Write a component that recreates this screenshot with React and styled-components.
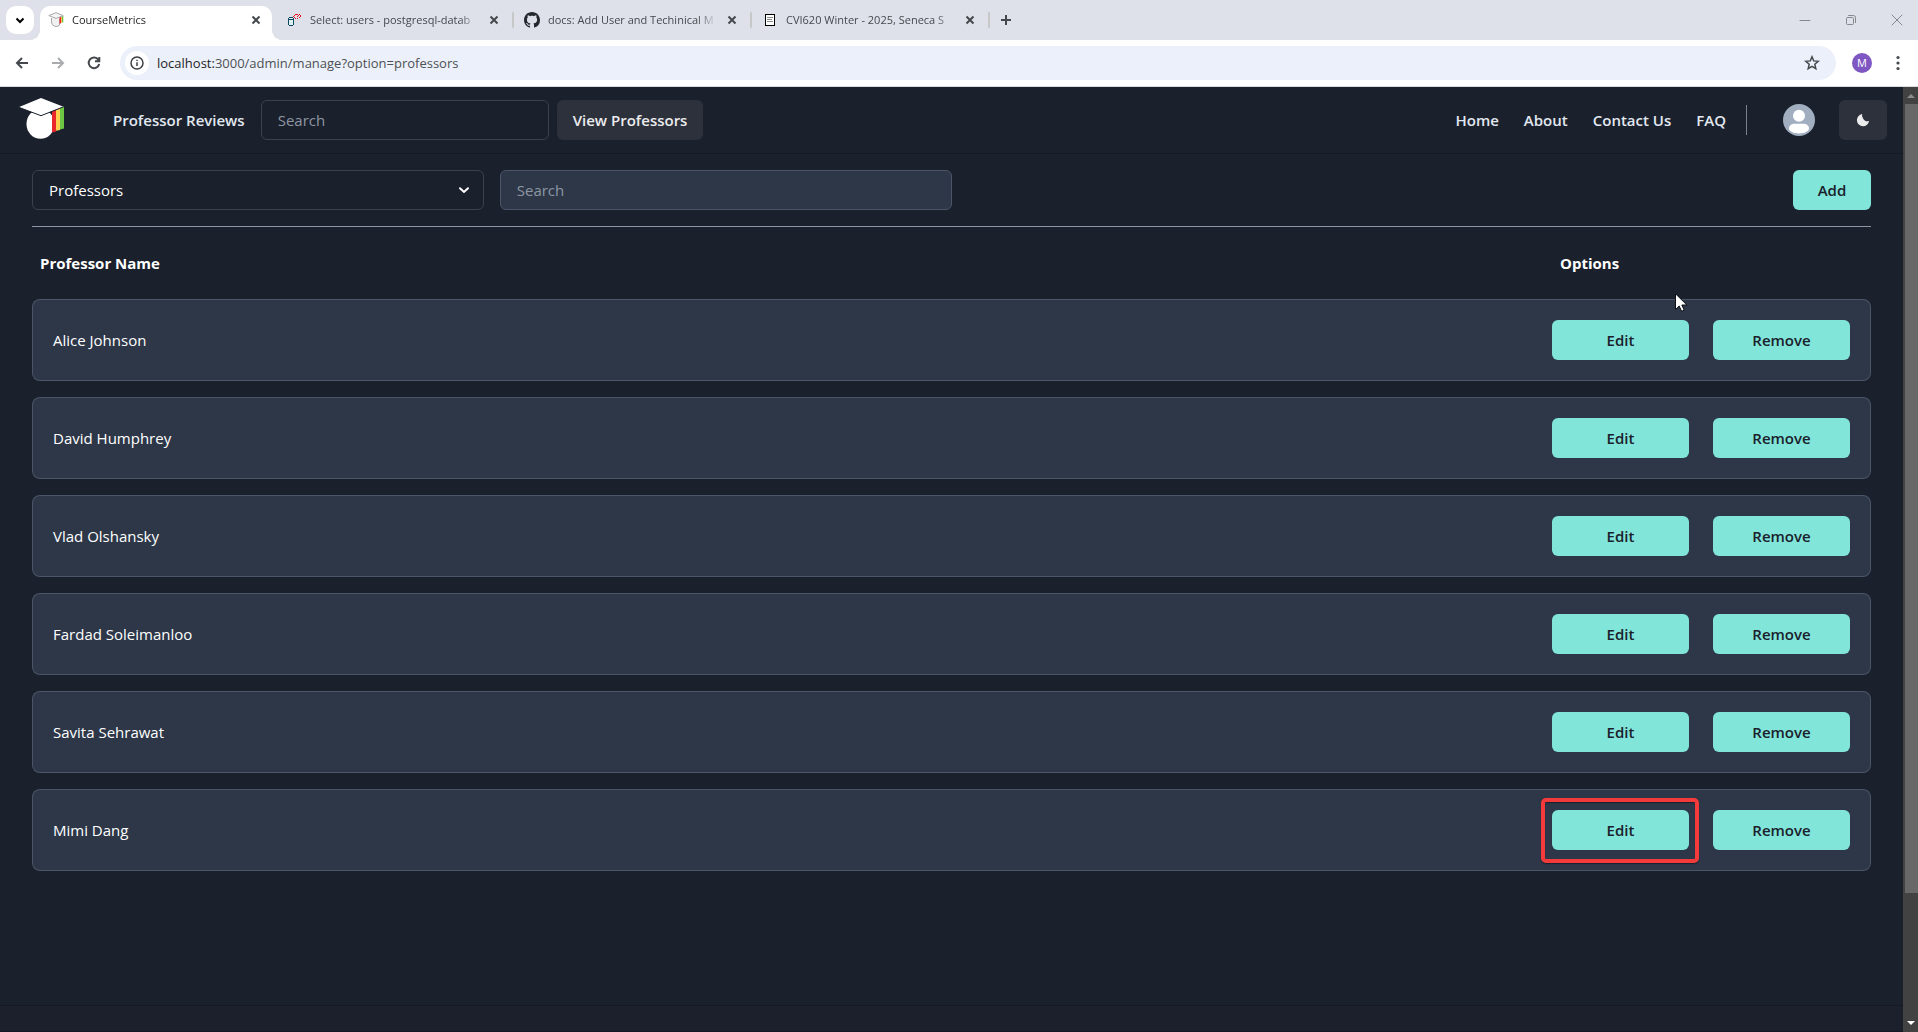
import React from "react";
import styled, { createGlobalStyle, css } from "styled-components";

const GlobalStyle = createGlobalStyle`
  *, *::before, *::after { box-sizing: border-box; }
  html, body, #root { height: 100%; }
  body {
    margin: 0;
    background: #1a202c;
    font-family: "Open Sans", "Noto Sans", sans-serif;
    font-size: 15px;
    line-height: 24px;
  }
  button, input, select { font: inherit; margin: 0; }
  button { border: 0; padding: 0; cursor: pointer; }
  svg { display: block; flex: none; }
`;

const Window = styled.div`
  display: flex;
  flex-direction: column;
  height: 100vh;
  overflow: hidden;
`;

/* ---------- browser chrome ---------- */

const TabStrip = styled.div`
  display: flex;
  align-items: center;
  flex: none;
  height: 40px;
  padding-left: 6px;
  background: #dee1e9;
`;

const TabSearch = styled.button`
  display: grid;
  place-items: center;
  width: 28px;
  height: 28px;
  margin-right: 6px;
  border-radius: 10px;
  background: #fff;
`;

const Tab = styled.div`
  position: relative;
  display: flex;
  align-items: center;
  width: 232px;
  height: 34px;
  margin-top: 6px;
  margin-right: ${(p) => (p.$active ? 6 : 2)}px;
  padding: 0 8px 6px;
  gap: 8px;
  font-size: 11px;
  line-height: 16px;
  color: #45494d;
  ${(p) =>
    p.$active &&
    css`
      background: #fff;
      color: #1f1f1f;
      border-radius: 10px 10px 0 0;
      &::before,
      &::after {
        content: "";
        position: absolute;
        bottom: 0;
        width: 10px;
        height: 10px;
      }
      &::before {
        right: 100%;
        background: radial-gradient(circle at 0 0, transparent 10px, #fff 10px);
      }
      &::after {
        left: 100%;
        background: radial-gradient(circle at 100% 0, transparent 10px, #fff 10px);
      }
    `}
`;

const TabTitle = styled.span`
  flex: 1;
  min-width: 0;
  white-space: nowrap;
  mask-image: linear-gradient(to right, #000 calc(100% - 18px), transparent);
`;

const PlainButton = styled.button`
  display: grid;
  place-items: center;
  width: ${(p) => p.$size}px;
  height: ${(p) => p.$size}px;
  flex: none;
  background: none;
  color: ${(p) => p.$color || "#45494d"};
`;

const TabDivider = styled.span`
  width: 2px;
  height: 16px;
  margin-right: 2px;
  border-radius: 1px;
  background: #c6c7c9;
`;

const WindowButtons = styled.div`
  display: flex;
  margin: 0 -2px 0 auto;
`;

const WindowButton = styled.button`
  display: grid;
  place-items: center;
  width: 46px;
  height: 40px;
  background: none;
  color: #85888c;
`;

const Toolbar = styled.div`
  display: flex;
  align-items: center;
  flex: none;
  height: 47px;
  padding: 0 10px;
  background: #fff;
  border-bottom: 1px solid #dadce0;
`;

const NavButtons = styled.div`
  display: flex;
  gap: 12px;
  margin: 0 14px 0 0;
`;

const AddressBar = styled.div`
  display: flex;
  align-items: center;
  flex: 1;
  height: 34px;
  padding: 0 12px 0 5px;
  gap: 8px;
  border-radius: 17px;
  background: #ecf0fa;
`;

const SiteInfo = styled.button`
  display: grid;
  place-items: center;
  width: 24px;
  height: 24px;
  border-radius: 50%;
  background: #fff;
  color: #3c4043;
`;

const Address = styled.p`
  flex: 1;
  margin: 0;
  font-size: 13px;
  line-height: 20px;
  color: #4c5054;
  b { font-weight: 400; color: #1f1f1f; }
`;

const Profile = styled.button`
  width: 20px;
  height: 20px;
  margin: 0 16px;
  border-radius: 50%;
  background: #7e57c2;
  color: #fff;
  font-size: 11px;
  line-height: 20px;
`;

/* ---------- page ---------- */

const Viewport = styled.div`
  display: flex;
  flex: 1;
  min-height: 0;
`;

const Page = styled.div`
  position: relative;
  display: flex;
  flex-direction: column;
  flex: 1;
  min-width: 0;
  color: #fff;
`;

const Header = styled.header`
  display: flex;
  align-items: center;
  justify-content: space-between;
  padding: 9px 16px;
  border-bottom: 1px solid #151924;
`;

const HeaderGroup = styled.div`
  display: flex;
  align-items: center;
  gap: ${(p) => p.$gap}px;
`;

const Brand = styled.a`
  display: block;
  margin-right: 33px;
`;

const NavLink = styled.a`
  padding: 0 ${(p) => p.$pad || 0}px;
  font-weight: 600;
  color: #e2e8f0;
  text-decoration: none;
  white-space: nowrap;
`;

const field = css`
  height: 40px;
  padding: 0 16px;
  border: 1px solid ${(p) => (p.$filled ? "#4a5568" : "#3c414c")};
  border-radius: 6px;
  background: ${(p) => (p.$filled ? "#2d3748" : "transparent")};
  color: #fff;
  outline: none;
`;

const TextField = styled.input`
  ${field}
  width: ${(p) => p.$width};
  &::placeholder { color: #8e96a3; opacity: 1; }
`;

const SubtleButton = styled.button`
  display: flex;
  align-items: center;
  justify-content: center;
  height: 40px;
  padding: 0 16px;
  border-radius: 6px;
  background: #2c313c;
  color: #ececee;
  font-weight: 600;
`;

const Divider = styled.span`
  width: 1px;
  height: 30px;
  margin-right: 36px;
  background: #7c828c;
`;

const SiteNav = styled.nav`
  display: flex;
  align-items: center;
  gap: 25px;
  margin-right: 20px;
`;

const Main = styled.main`
  flex: 1;
  padding: 16px 32px 0;
`;

const Controls = styled.div`
  display: flex;
  gap: 16px;
  padding-bottom: 16px;
  border-bottom: 1px solid #8f96a3;
`;

const SelectWrap = styled.div`
  display: grid;
  align-items: center;
  width: calc(25% - 8px);
  & > * { grid-area: 1 / 1; }
  & > svg { justify-self: end; margin-right: 10px; pointer-events: none; }
`;

const Select = styled.select`
  ${field}
  width: 100%;
  appearance: none;
  option { color: #1a202c; }
`;

const PrimaryButton = styled.button`
  position: relative;
  height: 40px;
  width: ${(p) => p.$width}px;
  border-radius: 6px;
  background: #81e6d9;
  color: #1a202c;
  font-weight: 600;
  ${(p) =>
    p.$marked &&
    css`
      &::after {
        content: "";
        position: absolute;
        inset: -12px -10px -13px -11px;
        border: 4px solid #f43a3a;
        border-radius: 5px;
        box-shadow: 0 1px 1px #1a202c, inset 0 1px 1px #1a202c;
      }
    `}
`;

const AddSlot = styled.div`
  margin-left: auto;
`;

const Table = styled.table`
  width: 100%;
  border-collapse: separate;
  border-spacing: 0 16px;
`;

const HeadCell = styled.th`
  height: 40px;
  padding: 0 8px;
  font-weight: 700;
  text-align: left;
`;

const NameCell = styled.td`
  height: 82px;
  padding: 0 20px;
  border: 1px solid #4a5568;
  border-right: 0;
  border-radius: 8px 0 0 8px;
  background: #2d3748;
`;

const OptionsCell = styled.td`
  width: 319px;
  padding: 0 20px 0 0;
  border: 1px solid #4a5568;
  border-left: 0;
  border-radius: 0 8px 8px 0;
  background: #2d3748;
`;

const Actions = styled.div`
  display: flex;
  justify-content: space-between;
`;

const Footer = styled.footer`
  height: 27px;
  background: #1b202c;
  border-top: 1px solid #151924;
  border-bottom: 1px solid #151924;
`;

const Pointer = styled.svg`
  position: absolute;
  top: 206px;
  right: 215px;
`;

const Scrollbar = styled.div`
  display: flex;
  flex-direction: column;
  align-items: center;
  width: 15px;
  background: #424242;
  padding: 7px 0;
`;

const ScrollTrack = styled.div`
  flex: 1;
  width: 100%;
  padding: 6px 0 7px 2px;
`;

const ScrollThumb = styled.div`
  height: calc(100% * 13 / 15);
  background: #686868;
`;

/* ---------- icons ---------- */

const LogoIcon = () => (
  <svg width="48" height="48" viewBox="0 0 48 48" aria-hidden="true">
    <ellipse cx="24.500" cy="28" rx="14" ry="14.700" fill="#fff" />
    <path d="M36 15.500l4-1.500v21.500l-4 1z" fill="#e8262b" />
    <path d="M40 14l4-1.500v21.500l-4 .8z" fill="#fbd04e" />
    <path d="M44 12l4-1.500v22l-4 1z" fill="#6cc644" />
    <path d="M25 2L2.500 11.200 25 19.500 47.500 10.800z" fill="#fff" />
    <path d="M2.500 11.200L25 19.700l22.500-8.900" fill="none" stroke="#1a202c" />
  </svg>
);

const CapIcon = () => (
  <svg width="16" height="16" viewBox="0 0 16 16" aria-hidden="true">
    <path d="M3.500 6v4a4.600 4.600 0 0 0 8 3V6.500" fill="#f1f1f1" stroke="#a6a8ab" />
    <path d="M11.500 5h1.500v6.500h-1.500z" fill="#e8262b" />
    <path d="M13 4.500h1v6.300h-1z" fill="#fbc04e" />
    <path d="M14 4h1.300v6.500H14z" fill="#6cc644" />
    <path d="M8 .8L.8 3.600 8 6.400l7.200-2.800z" fill="#f7f7f7" stroke="#a6a8ab" strokeLinejoin="round" />
  </svg>
);

const Stroke = ({ d, size = 16, box = 16, width = 2, round = true }) => (
  <svg width={size} height={size} viewBox={`0 0 ${box} ${box}`} fill="none" stroke="currentColor" strokeWidth={width} strokeLinecap={round ? "round" : "butt"} aria-hidden="true">
    <path d={d} />
  </svg>
);

const DatabaseIcon = () => (
  <svg width="16" height="16" viewBox="0 0 16 16" fill="none" shapeRendering="crispEdges" aria-hidden="true">
    <path d="M3 5h4v9H3z" fill="#dff1f5" />
    <path d="M3 5.500h4M3 7.500h4M3 13.500h4M2.500 6v7M7.500 6v7" stroke="#0b4a63" />
    <path d="M9 2.500h1M8 3.500h1M7 4.500h1M8 5.500h1M9 6.500h1M10 2.500h2M12 3.500h1M11 4.500h1M11 6.500h1M13 2.500h1M14 3.500h1M13 5.500h1M14 4.500h1" stroke="#e8101c" />
  </svg>
);

const GithubIcon = () => (
  <svg width="16" height="16" viewBox="0 0 16 16" fill="#24292f" aria-hidden="true">
    <path d="M8 0C3.580 0 0 3.580 0 8c0 3.540 2.290 6.530 5.470 7.590.4.070.55-.17.55-.38 0-.19-.01-.82-.01-1.490-2.010.37-2.530-.49-2.690-.94-.09-.23-.48-.94-.82-1.130-.28-.15-.68-.52-.01-.53.63-.01 1.080.58 1.230.82.72 1.210 1.870.87 2.330.66.07-.52.28-.87.51-1.070-1.780-.2-3.640-.89-3.640-3.950 0-.87.31-1.590.82-2.150-.08-.2-.36-1.020.08-2.120 0 0 .67-.21 2.200.82.64-.18 1.320-.27 2-.27s1.360.09 2 .27c1.530-1.040 2.200-.82 2.200-.82.44 1.100.16 1.920.08 2.120.51.56.82 1.270.82 2.150 0 3.070-1.870 3.750-3.650 3.950.29.25.54.73.54 1.480 0 1.070-.01 1.930-.01 2.200 0 .21.15.46.55.38A8.010 8.010 0 0 0 16 8c0-4.420-3.580-8-8-8z" />
  </svg>
);

const PageIcon = () => (
  <svg width="16" height="16" viewBox="0 0 16 16" shapeRendering="crispEdges" aria-hidden="true">
    <path d="M3.500 2.500h9v11h-9z" fill="#fff" stroke="#000" />
    <path d="M5 5.500h6M5 7.500h5M5 9.500h6" stroke="#8c8c8c" />
  </svg>
);

const StarIcon = () => (
  <svg width="16" height="16" viewBox="0 0 16 16" fill="none" stroke="#45494d" strokeWidth="1.500" strokeLinejoin="miter" aria-hidden="true">
    <path d="M8 1.800l1.700 4.100 4.500.4-3.400 2.900 1 4.400L8 11.300l-3.800 2.300 1-4.400L1.800 6.300l4.500-.4z" />
  </svg>
);

const AvatarIcon = () => (
  <svg width="32" height="32" viewBox="0 0 32 32" aria-hidden="true">
    <circle cx="16" cy="16" r="16" fill="#a0aec0" />
    <circle cx="16" cy="11.800" r="6" fill="#fff" />
    <path d="M12 19.800h8c3.700 0 6 2 6 4.700 0 3-4.600 4.900-10 4.900S6 27.500 6 24.500c0-2.700 2.300-4.700 6-4.700z" fill="#fff" />
  </svg>
);

const MoonIcon = () => (
  <svg width="16" height="16" viewBox="0 0 16 16" aria-hidden="true">
    <path d="M7.200 2A6.100 6.100 0 1 0 14.100 8.700 4.200 4.200 0 0 1 8.100 6.500 4.600 4.600 0 0 1 7.200 2z" fill="#ececee" />
  </svg>
);

const CLOSE = "M4.500 4.500l7 7M11.500 4.500l-7 7";
const TABS = [
  { title: "CourseMetrics", icon: <CapIcon />, active: true },
  { title: "Select: users - postgresql-datab", icon: <DatabaseIcon /> },
  { title: "docs: Add User and Techinical M", icon: <GithubIcon /> },
  { title: "CVI620 Winter - 2025, Seneca S", icon: <PageIcon /> },
];

const PROFESSORS = [
  "Alice Johnson",
  "David Humphrey",
  "Vlad Olshansky",
  "Fardad Soleimanloo",
  "Savita Sehrawat",
  "Mimi Dang",
];

function BrowserChrome() {
  return (
    <>
      <TabStrip>
        <TabSearch aria-label="Search tabs">
          <Stroke d="M4.500 6.500L8 10l3.500-3.500" round={false} />
        </TabSearch>
        {TABS.map((tab) => (
          <React.Fragment key={tab.title}>
            <Tab $active={tab.active}>
              {tab.icon}
              <TabTitle>{tab.title}</TabTitle>
              <PlainButton $size={16} aria-label="Close tab">
                <Stroke d={CLOSE} round={false} />
              </PlainButton>
            </Tab>
            {!tab.active && <TabDivider />}
          </React.Fragment>
        ))}
        <PlainButton $size={28} aria-label="New tab">
          <Stroke d="M8 3v10M3 8h10" round={false} />
        </PlainButton>
        <WindowButtons>
          <WindowButton aria-label="Minimize"><Stroke d="M3 8.500h10" width={1} /></WindowButton>
          <WindowButton aria-label="Restore">
            <Stroke d="M4.500 5.500h5a1 1 0 0 1 1 1v5a1 1 0 0 1-1 1h-5a1 1 0 0 1-1-1v-5a1 1 0 0 1 1-1zM5.500 3.500h5a2 2 0 0 1 2 2v5" width={1} />
          </WindowButton>
          <WindowButton aria-label="Close"><Stroke d="M3 3l10 10M13 3L3 13" width={1} /></WindowButton>
        </WindowButtons>
      </TabStrip>
      <Toolbar>
        <NavButtons>
          <PlainButton $size={24} aria-label="Back"><Stroke d="M14 8H3M8 3L3 8l5 5" round={false} /></PlainButton>
          <PlainButton $size={24} $color="#a9abae" aria-label="Forward"><Stroke d="M2 8h11M8 3l5 5-5 5" round={false} /></PlainButton>
          <PlainButton $size={24} aria-label="Reload"><Stroke d="M13.200 9A5.300 5.300 0 1 1 12 4.300L13.300 6M13.300 2v4.300H9" round={false} /></PlainButton>
        </NavButtons>
        <AddressBar>
          <SiteInfo aria-label="Site information">
            <Stroke d="M8 2a6 6 0 1 1 0 12A6 6 0 0 1 8 2zM8 7.300v3.700M8 4.700v1.300" width={1.5} round={false} />
          </SiteInfo>
          <Address><b>localhost:</b>3000/admin/manage?option=professors</Address>
          <PlainButton $size={24} aria-label="Bookmark"><StarIcon /></PlainButton>
        </AddressBar>
        <Profile aria-label="Profile">M</Profile>
        <PlainButton $size={20} aria-label="Menu">
          <svg width="16" height="16" viewBox="0 0 16 16" fill="currentColor" aria-hidden="true">
            <circle cx="8" cy="2.500" r="1.600" /><circle cx="8" cy="8" r="1.600" /><circle cx="8" cy="13.500" r="1.600" />
          </svg>
        </PlainButton>
      </Toolbar>
    </>
  );
}

function SiteHeader() {
  return (
    <Header>
      <HeaderGroup $gap={8}>
        <Brand href="#" aria-label="CourseMetrics"><LogoIcon /></Brand>
        <NavLink href="#" $pad={8}>Professor Reviews</NavLink>
        <TextField $width="288px" placeholder="Search" aria-label="Search reviews" />
        <SubtleButton>View Professors</SubtleButton>
      </HeaderGroup>
      <HeaderGroup $gap={0}>
        <SiteNav>
          <NavLink href="#">Home</NavLink>
          <NavLink href="#">About</NavLink>
          <NavLink href="#">Contact Us</NavLink>
          <NavLink href="#">FAQ</NavLink>
        </SiteNav>
        <Divider />
        <HeaderGroup $gap={24}>
          <PlainButton $size={32} aria-label="Account"><AvatarIcon /></PlainButton>
          <SubtleButton aria-label="Toggle color mode"><MoonIcon /></SubtleButton>
        </HeaderGroup>
      </HeaderGroup>
    </Header>
  );
}

export default function App() {
  return (
    <Window>
      <GlobalStyle />
      <BrowserChrome />
      <Viewport>
        <Page>
          <SiteHeader />
          <Main>
            <Controls>
              <SelectWrap>
                <Select aria-label="Manage" defaultValue="professors">
                  <option value="professors">Professors</option>
                </Select>
                <Stroke d="M6 8.300l4 3.700 4-3.700" size={20} box={20} />
              </SelectWrap>
              <TextField $filled $width="calc(25% - 8px)" placeholder="Search" aria-label="Search professors" />
              <AddSlot><PrimaryButton $width={78}>Add</PrimaryButton></AddSlot>
            </Controls>
            <Table>
              <thead>
                <tr>
                  <HeadCell scope="col">Professor Name</HeadCell>
                  <HeadCell scope="col">Options</HeadCell>
                </tr>
              </thead>
              <tbody>
                {PROFESSORS.map((name) => (
                  <tr key={name}>
                    <NameCell>{name}</NameCell>
                    <OptionsCell>
                      <Actions>
                        <PrimaryButton $width={137} $marked={name === "Mimi Dang"}>Edit</PrimaryButton>
                        <PrimaryButton $width={137}>Remove</PrimaryButton>
                      </Actions>
                    </OptionsCell>
                  </tr>
                ))}
              </tbody>
            </Table>
          </Main>
          <Footer />
          <Pointer width="13" height="19" viewBox="0 0 13 19" aria-hidden="true">
            <path d="M.5.8v15.700l3.700-3.500 2.400 5.300 2.600-1.100-2.400-5.200h5.100z" fill="#fff" stroke="#0d0f14" />
          </Pointer>
        </Page>
        <Scrollbar aria-hidden="true">
          <svg width="8" height="4" viewBox="0 0 8 4"><path d="M4 0l4 4H0z" fill="#8c8c8c" /></svg>
          <ScrollTrack><ScrollThumb /></ScrollTrack>
          <svg width="8" height="4" viewBox="0 0 8 4"><path d="M0 0h8L4 4z" fill="#fff" /></svg>
        </Scrollbar>
      </Viewport>
    </Window>
  );
}
